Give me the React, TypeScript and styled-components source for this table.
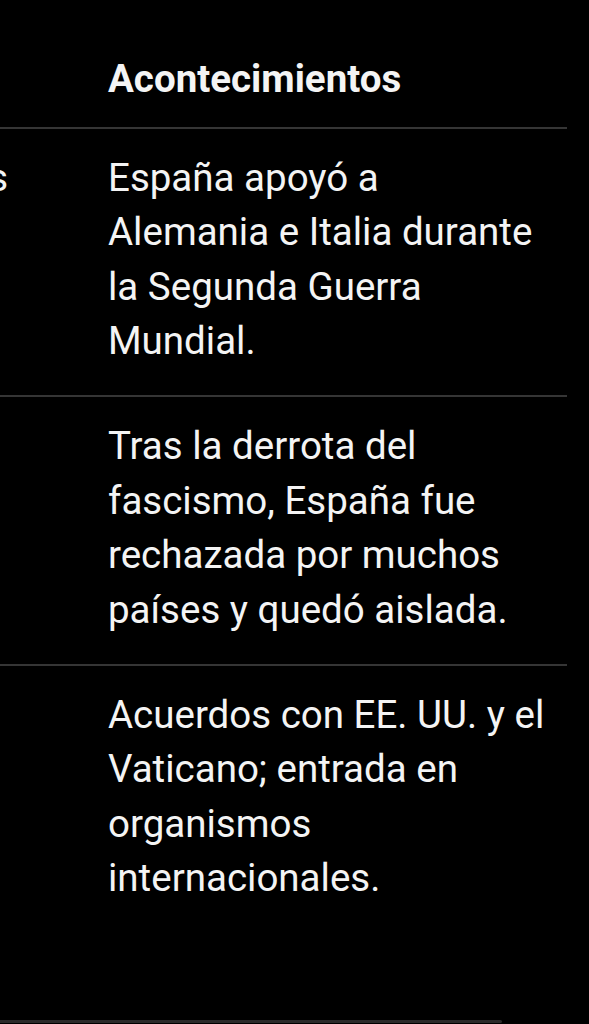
import React from "react";
import styled, { createGlobalStyle } from "styled-components";

const GlobalStyle = createGlobalStyle`
  html, body {
    margin: 0;
    padding: 0;
    background: #000;
  }
  body {
    font-family: Roboto, "Noto Sans", "Liberation Sans", sans-serif;
    color: #f4f4f4;
  }
`;

const Page = styled.div`
  height: 1024px;
  display: flex;
  flex-direction: column;
  background: #000;
  overflow: hidden;
`;

const TableViewport = styled.div`
  width: 567px;
  overflow: hidden;
`;

// the table is scrolled sideways, so the first column sits mostly off screen
const TableGrid = styled.div`
  display: grid;
  grid-template-columns: 380px 475px;
  margin-left: -288px;
  width: 855px;
`;

const Cell = styled.div<{ $head?: boolean; $alignRight?: boolean; $last?: boolean }>`
  padding: ${(p) => (p.$head ? "52px 22px 20px 16px" : "22px 22px 26.5px 16px")};
  padding-right: ${(p) => (p.$alignRight ? "84px" : "22px")};
  text-align: ${(p) => (p.$alignRight ? "right" : "left")};
  font-size: 38.5px;
  line-height: 54.5px;
  font-weight: ${(p) => (p.$head ? 700 : 400)};
  border-bottom: ${(p) => (p.$last ? "none" : "2px solid #353535")};
  white-space: ${(p) => (p.$alignRight ? "nowrap" : "normal")};
`;

const ScrollBar = styled.div`
  margin-top: auto;
  margin-bottom: 1px;
  width: 502px;
  height: 3px;
  background: #2b2b2b;
  border-radius: 0 2px 2px 0;
`;

interface Row {
  period: string;
  events: string;
  rightAlign?: boolean;
}

const rows: Row[] = [
  {
    period: "Primeros años",
    events: "España apoyó a Alemania e Italia durante la Segunda Guerra Mundial.",
    rightAlign: true,
  },
  {
    period: "",
    events:
      "Tras la derrota del fascismo, España fue rechazada por muchos países y quedó aislada.",
  },
  {
    period: "",
    events:
      "Acuerdos con EE. UU. y el Vaticano; entrada en organismos internacionales.",
  },
];

const App: React.FC = () => {
  return (
    <Page>
      <GlobalStyle />
      <TableViewport>
        <TableGrid>
          <Cell $head>Etapa</Cell>
          <Cell $head>Acontecimientos</Cell>
          {rows.map((row, i) => (
            <React.Fragment key={i}>
              <Cell $alignRight={row.rightAlign} $last={i === rows.length - 1}>
                {row.period}
              </Cell>
              <Cell $last={i === rows.length - 1}>{row.events}</Cell>
            </React.Fragment>
          ))}
        </TableGrid>
      </TableViewport>
      <ScrollBar />
    </Page>
  );
};

export default App;
